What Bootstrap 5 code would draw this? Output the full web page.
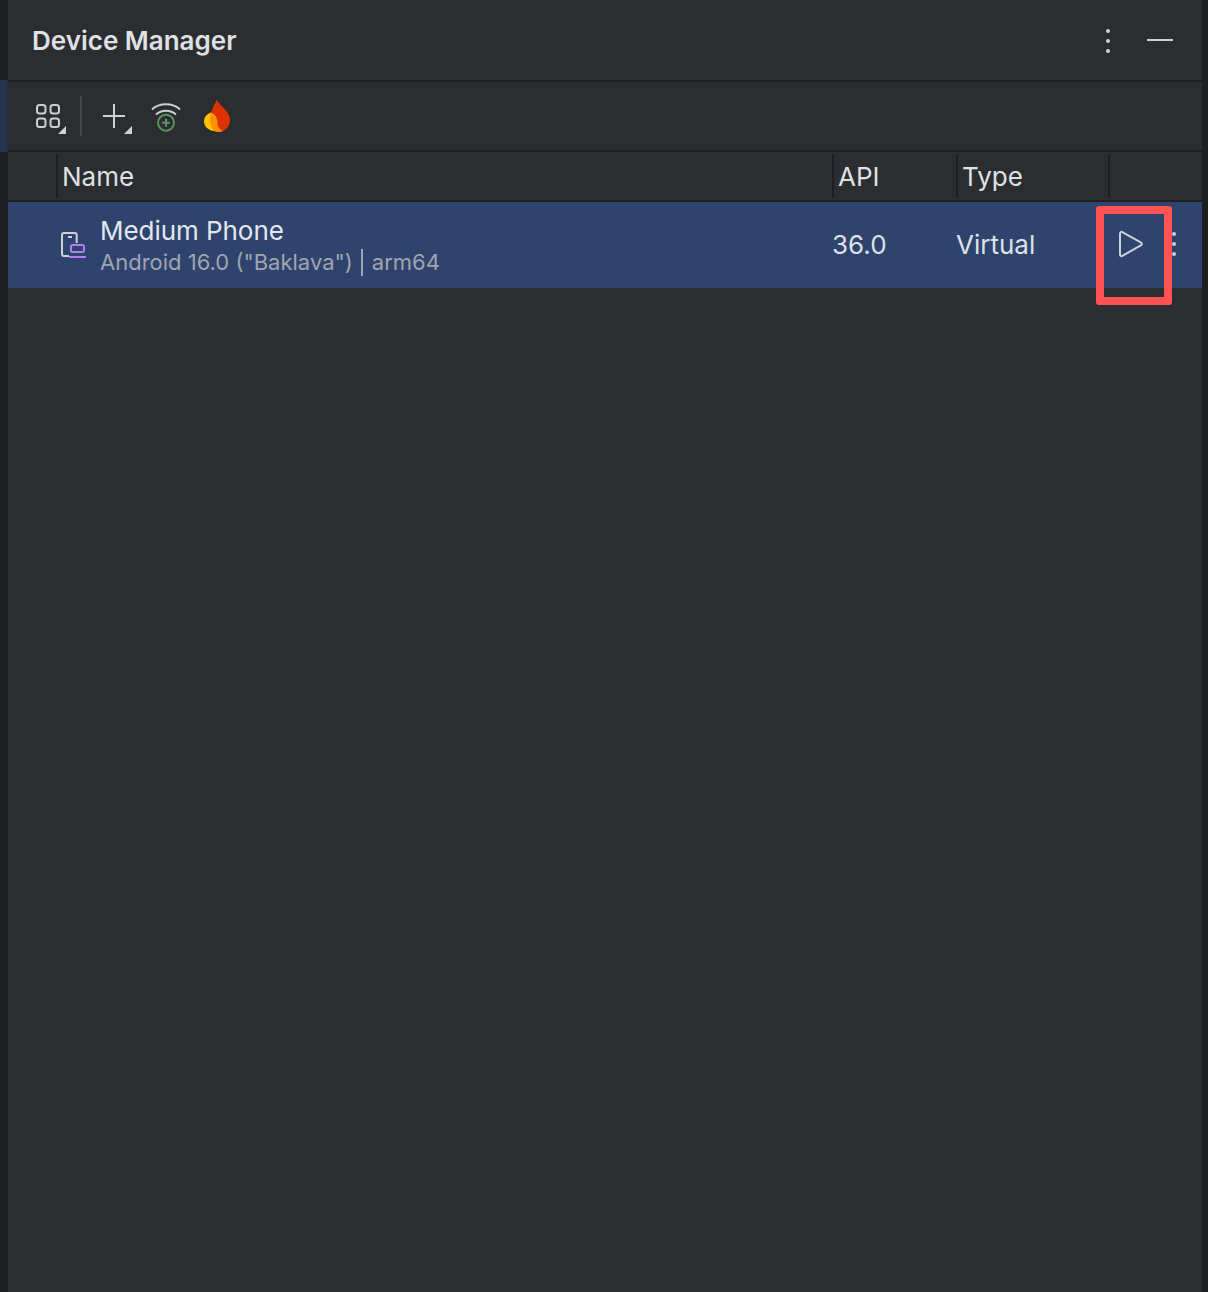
<!DOCTYPE html>
<html lang="en">
<head>
    <meta charset="UTF-8">
    <meta name="viewport" content="width=device-width, initial-scale=1.0">
    <title>Device Manager</title>
    <link href="https://cdn.jsdelivr.net/npm/bootstrap@5.3.0/dist/css/bootstrap.min.css" rel="stylesheet">
    <style>
        html, body { height: 100%; }
        body {
            background: #2b2d30;
            color: #dfe1e5;
            font-family: Inter, "Liberation Sans", sans-serif;
            overflow: hidden;
        }
        .ide-shell { height: 1292px; }
        .side-strip { width: 8px; background: #1e1f22; flex-shrink: 0; }
        .side-strip .active-tab { margin-top: 80px; height: 72px; background: #25324d; border-right: 1px solid #2b2d30; }
        .right-strip { width: 6px; background: #1e1f22; flex-shrink: 0; border-left: 1px solid #1e1f22; }
        .tool-panel { position: relative; min-width: 0; }
        .panel-head {
            height: 82px;
            padding: 2px 29px 0 24px;
            border-bottom: 2px solid #1e1f22;
        }
        .panel-title { font-size: 26px; font-weight: 600; color: #dfe1e5; margin: 0; }
        .minimize-icon { margin-left: 36px; margin-top: -2px; }
        .tool-bar {
            height: 70px;
            padding: 2px 0 0 28px;
            border-bottom: 2px solid #1e1f22;
        }
        .tool-sep { width: 2px; height: 40px; background: #43454a; margin: -2px 21px 0 14px; }
        .tool-wifi { margin-left: 19px; }
        .tool-flame { margin-left: 23px; }
        .dev-head {
            height: 50px;
            border-bottom: 2px solid #1e1f22;
            font-size: 26px;
            color: #dfe1e5;
        }
        .dev-col { height: 44px; margin-top: 2px; border-left: 2px solid #1e1f22; padding-left: 4px; line-height: 46px; }
        .col-lead { width: 48px; }
        .col-name { width: 776px; }
        .col-api { width: 124px; }
        .col-type { width: 152px; }
        .col-rest { width: 93px; height: 44px; margin-top: 2px; border-left: 2px solid #1e1f22; }
        .dev-row { height: 86px; background: #2e436e; font-size: 26px; }
        .dev-name { width: 771px; padding-left: 92px; padding-top: 14px; position: relative; align-self: stretch; }
        .dev-icon { position: absolute; left: 53px; top: 29px; }
        .dev-title { line-height: 30px; color: #e4e7ed; letter-spacing: -.05px; }
        .dev-sub { font-size: 22px; line-height: 30px; margin-top: 1px; color: #a1a5ad; }
        .dev-bar { display: inline-block; width: 2px; height: 27px; background: #a1a5ad; margin: 0 8.500px 0 8.500px; vertical-align: -6px; }
        .dev-api { width: 124px; color: #dfe1e5; margin-left: 53px; margin-top: -1px; }
        .dev-type { width: 140px; color: #dfe1e5; margin-top: -1px; }
        .dev-play { margin-left: 22px; margin-top: -2px; }
        .dev-more { margin-left: 27px; margin-top: -2px; }
        .callout {
            position: absolute;
            left: 1088px;
            top: 206px;
            width: 76px;
            height: 99px;
            border: 8px solid #ff5252;
            border-radius: 3px;
        }
    </style>
</head>
<body>

<div class="ide-shell d-flex">
    <div class="side-strip"><div class="active-tab"></div></div>

    <div class="tool-panel flex-grow-1">
        <div class="panel-head d-flex align-items-center justify-content-between">
            <h1 class="panel-title">Device Manager</h1>
            <div class="d-flex align-items-center">
                <svg width="6" height="26" viewBox="0 0 6 26"><g fill="#ced0d6"><circle cx="3" cy="3" r="2"/><circle cx="3" cy="13" r="2"/><circle cx="3" cy="23" r="2"/></g></svg>
                <svg class="minimize-icon" width="26" height="4" viewBox="0 0 26 4"><rect y="1" width="26" height="2" fill="#ced0d6"/></svg>
            </div>
        </div>

        <div class="tool-bar d-flex align-items-center">
            <!-- all toolbar icons share one 34px box, top edge at y=100 -->
            <svg width="30" height="34" viewBox="0 0 30 34"><g fill="none" stroke="#ced0d6" stroke-width="2"><rect x="1" y="5" width="8.500" height="8.500" rx="2.500"/><rect x="14.500" y="5" width="8.500" height="8.500" rx="2.500"/><rect x="1" y="18.500" width="8.500" height="8.500" rx="2.500"/><rect x="14.500" y="18.500" width="8.500" height="8.500" rx="2.500"/></g><path d="M30 26v8h-8z" fill="#ced0d6"/></svg>
            <div class="tool-sep"></div>
            <svg width="29" height="34" viewBox="0 0 29 34"><path d="M11 4v24M0 16h22" stroke="#ced0d6" stroke-width="2" fill="none"/><path d="M29 26v8h-8z" fill="#ced0d6"/></svg>
            <svg class="tool-wifi" width="30" height="34" viewBox="0 0 30 34"><g fill="none"><path d="M1 9.500C8 2.500 22 2.500 29 9.500M5 14.500C10.500 9.500 19.500 9.500 25 14.500" stroke="#ced0d6" stroke-width="1.800"/><circle cx="15" cy="22.700" r="8" stroke="#57965c" stroke-width="2"/><path d="M15 18.700v8M11 22.700h8" stroke="#57965c" stroke-width="2"/></g></svg>
            <svg class="tool-flame" width="26" height="34" viewBox="0 0 26 34"><path d="M12.700 0C15 5 26 11 26 20C26 27 20.500 32 15 32C10 32 6 27 6 20C6 12 10 6 12.700 0z" fill="#dd3200"/><path d="M7 12.500C2.500 14 0 17.500 0 21.500c0 5 4.500 9 10 9.500 3 .5 6 .5 8 0-5-1-8-5-9-10-.5-3-1-6-2-8.500z" fill="#ffc400"/><path d="M7 12.500C11 14 13.500 18 13.500 22C13.500 26 15 29.500 19 31C16.500 32 12 32 9.500 30.700C7 27 6 23 6 19C6 17 6.300 14.500 7 12.500z" fill="#ff9100"/></svg>
        </div>

        <div class="dev-head d-flex">
            <div class="col-lead"></div>
            <div class="dev-col col-name">Name</div>
            <div class="dev-col col-api">API</div>
            <div class="dev-col col-type">Type</div>
            <div class="col-rest"></div>
        </div>

        <div class="dev-row d-flex align-items-center">
            <div class="dev-name">
                <svg class="dev-icon" width="27" height="28" viewBox="0 0 27 28"><g fill="none" stroke-width="2"><path d="M8 25H3a2 2 0 0 1-2-2V4a2 2 0 0 1 2-2h10.700a2 2 0 0 1 2 2v8" stroke="#ced0d6"/><path d="M7 6h4" stroke="#ced0d6"/><rect x="10" y="14" width="13" height="7" rx="1.500" stroke="#b07eed"/><path d="M8 26h17" stroke="#b07eed"/></g></svg>
                <div class="dev-title">Medium Phone</div>
                <div class="dev-sub">Android 16.0 ("Baklava")<span class="dev-bar"></span>arm64</div>
            </div>
            <div class="dev-api">36.0</div>
            <div class="dev-type">Virtual</div>
            <svg class="dev-play" width="26" height="28" viewBox="0 0 26 28"><path d="M2 3.500c0-1.500 1.200-2 2.300-1.400l18.500 10.300c1.300.7 1.300 2.300 0 3L4.300 25.900C3.200 26.500 2 26 2 24.500z" fill="none" stroke="#ced0d6" stroke-width="2"/></svg>
            <svg class="dev-more" width="6" height="26" viewBox="0 0 6 26"><g fill="#ced0d6"><circle cx="3" cy="3" r="2"/><circle cx="3" cy="13" r="2"/><circle cx="3" cy="23" r="2"/></g></svg>
        </div>

        <div class="callout"></div>
    </div>

    <div class="right-strip"></div>
</div>

<script src="https://cdn.jsdelivr.net/npm/bootstrap@5.3.0/dist/js/bootstrap.bundle.min.js"></script>
</body>
</html>
